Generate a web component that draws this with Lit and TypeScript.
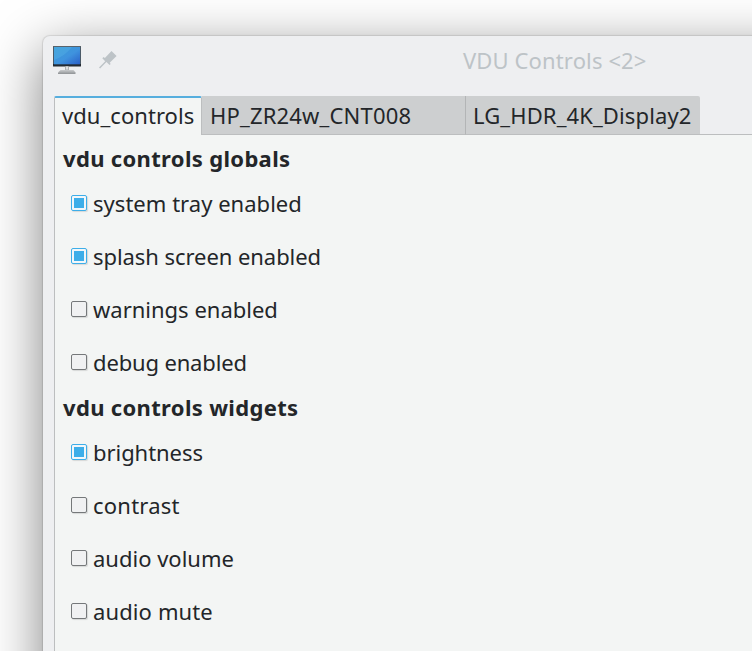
import { LitElement, html, css, svg } from "lit";
import { customElement, property, state } from "lit/decorators.js";
import { classMap } from "lit/directives/class-map.js";
import { styleMap } from "lit/directives/style-map.js";

@customElement("vdu-check")
class VduCheck extends LitElement {
  static styles = css`
    :host { display: block; height: 53px; }
    .row { display: flex; align-items: center; gap: 6px; height: 53px; padding-left: 16px; }
    .box {
      box-sizing: border-box; width: 16px; height: 16px; flex: none;
      border: 1px solid #75787a; border-radius: 2px; background: #f0f1f2;
      display: flex; align-items: center; justify-content: center;
      box-shadow: 1px 1px 1px rgba(0, 0, 0, 0.12);
      margin-bottom: 2px;
    }
    .box.on { border-color: #3daee9; background: #f2f7fa; }
    .mark { width: 10px; height: 10px; background: #3daee9; }
    .label { line-height: 30px; margin-bottom: 2px; white-space: nowrap; }
  `;
  @property() label = "";
  @property({ type: Number }) tracking = 0;
  @property({ type: Boolean }) checked = false;
  render() {
    return html`<div class="row" @click=${() => (this.checked = !this.checked)}>
      <span class=${classMap({ box: true, on: this.checked })}>${this.checked ? html`<span class="mark"></span>` : ""}</span>
      <span class="label" style=${styleMap({ letterSpacing: `${this.tracking}px` })}>${this.label}</span>
    </div>`;
  }
}

const monitor = svg`
  <defs>
    <linearGradient id="screen" x1="0" y1="0" x2="1" y2="1">
      <stop offset="0" stop-color="#3a9cd6"/><stop offset=".55" stop-color="#3f93de"/><stop offset="1" stop-color="#2a60c8"/>
    </linearGradient>
    <linearGradient id="foot" x1="0" y1="0" x2="0" y2="1">
      <stop offset="0" stop-color="#c9cbcd"/><stop offset="1" stop-color="#8f9295"/>
    </linearGradient>
  </defs>
  <rect x="0" y="0" width="28" height="20.5" rx=".6" fill="#232b33"/>
  <rect x="0" y="0" width="28" height="1" rx=".5" fill="#59636c"/>
  <rect x="0" y="1" width="1" height="17" fill="#4b5a68"/>
  <rect x="27" y="1" width="1" height="17" fill="#4b5a68"/>
  <rect x="1" y="1" width="26" height="17.3" fill="url(#screen)"/>
  <path d="M1 14 Q12 10 19 1 L1 1Z" fill="#66c2ee" opacity=".25"/>
  <path d="M12 20.5h4v4h-4z" fill="#aeb1b4"/>
  <path d="M13 20.5h2v3h-2z" fill="#dfe1e2"/>
  <path d="M7.5 24h13l2 2.5v1.5h-17.5v-1.5z" fill="url(#foot)"/>`;

@customElement("app-root")
class AppRoot extends LitElement {
  static styles = css`
    :host {
      display: block; width: 752px; height: 651px; overflow: hidden; background: #fff;
      font: 22px "Noto Sans", sans-serif; color: #232629;
    }
    .desktop { box-sizing: border-box; height: 651px; padding: 36px 0 0 43px; overflow: hidden; }
    .window {
      box-sizing: border-box; width: 1024px; height: 900px; background: #eeeff1;
      border-radius: 7px 7px 0 0; display: flex; flex-direction: column;
      box-shadow: 0 0 1px 1px rgba(0, 0, 0, 0.1), 0 15px 56px rgba(0, 0, 0, 0.5);
    }
    .titlebar { display: flex; align-items: flex-start; height: 60px; flex: none; }
    .monitor { width: 28px; height: 28px; margin: 10px 0 0 10px; }
    .pin { width: 18px; height: 18px; margin: 15px 0 0 18px; }
    .title { color: #bdc3c7; line-height: 30px; margin: 9px 0 0 346px; white-space: nowrap; letter-spacing: 0.13px; }
    .tabs { display: flex; height: 39px; flex: none; margin-left: 11px; }
    .tab {
      box-sizing: border-box; height: 39px; padding-left: 8px; line-height: 38px; white-space: nowrap;
      background: #cdcfd0; border-bottom: 1px solid #bcbebf;
    }
    .tab:nth-child(1) { width: 148px; letter-spacing: 0.05px; }
    .tab:nth-child(2) { width: 263px; letter-spacing: 0.18px; }
    .tab:nth-child(3) { width: 235px; border-left: 1px solid #b3b5b6; padding-left: 7px; border-top-right-radius: 2px; letter-spacing: 0.12px; }
    .tab.active {
      background: #f3f5f4; border: 1px solid #bcbebf; border-bottom: 0; border-top: 2px solid #56aede;
      border-radius: 2px 2px 0 0; padding-left: 7px; line-height: 34px;
    }
    .rest { flex: 1; border-bottom: 1px solid #bcbebf; }
    .pane { flex: 1; margin-left: 11px; border-left: 1px solid #bcbebf; background: #f3f5f4; padding-top: 5px; }
    .heading { height: 37px; line-height: 36px; padding-left: 8px; font-size: 22px; font-weight: 700; margin: 0; letter-spacing: 0.33px; }
  `;
  @state() private active = 0;
  private tabs = ["vdu_controls", "HP_ZR24w_CNT008", "LG_HDR_4K_Display2"];
  private groups = [
    { title: "vdu controls globals", items: [["system tray enabled", true, 0.03], ["splash screen enabled", true, -0.06], ["warnings enabled", false, 0], ["debug enabled", false, -0.15]] },
    { title: "vdu controls widgets", items: [["brightness", true, -0.05], ["contrast", false, 0.22], ["audio volume", false, 0], ["audio mute", false, 0.12]] },
  ];
  render() {
    return html`<div class="desktop"><div class="window">
      <div class="titlebar">
        <svg class="monitor" viewBox="0 0 28 28">${monitor}</svg>
        <svg class="pin" viewBox="0 0 18 18" fill="#bdc3c7">
          <path d="M12.5 0 L17.6 5 L10.7 11.8 L11.7 13 L10.6 14.1 L7.4 11.1 L1.1 17.6 L0 16.5 L6.2 10.2 L3.3 7.2 L4.6 5.9 L5.9 6.9Z"/>
        </svg>
        <span class="title">VDU Controls &lt;2&gt;</span>
      </div>
      <div class="tabs">
        ${this.tabs.map((t, i) => html`<div class=${classMap({ tab: true, active: i === this.active })} @click=${() => (this.active = i)}>${t}</div>`)}
        <div class="rest"></div>
      </div>
      <div class="pane">
        ${this.groups.map((g) => html`<h2 class="heading">${g.title}</h2>
          ${g.items.map(([label, on, tracking]) => html`<vdu-check .label=${label} .checked=${on} .tracking=${tracking}></vdu-check>`)}`)}
      </div>
    </div></div>`;
  }
}
